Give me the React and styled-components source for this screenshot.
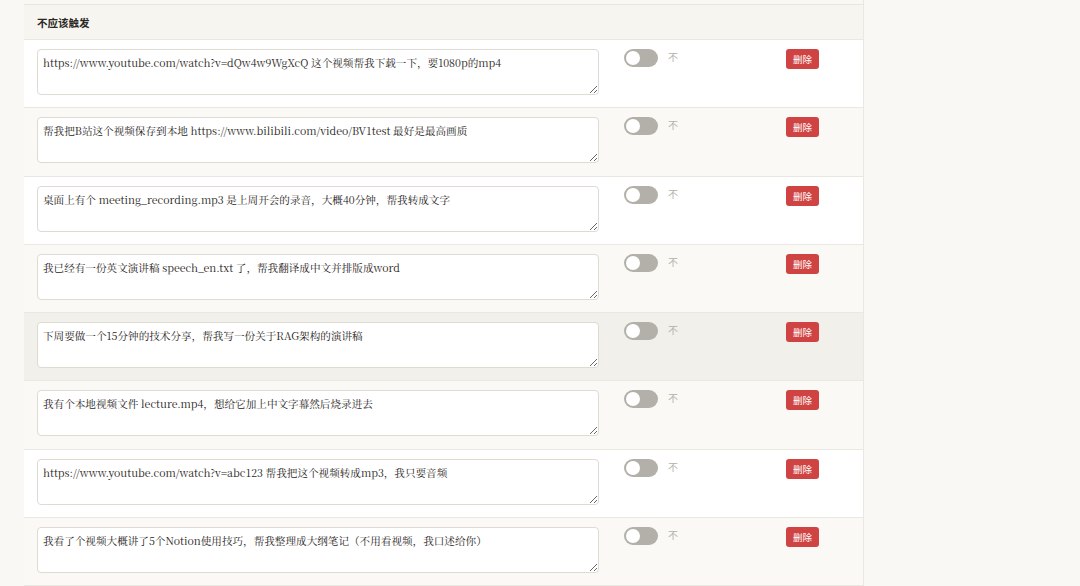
import React from "react";
import styled, { createGlobalStyle } from "styled-components";

const Global = createGlobalStyle`
  html, body { margin: 0; padding: 0; background: #f9f8f4; }
  body { font-family: "Noto Sans CJK SC", "Noto Sans", sans-serif; }
`;

const Page = styled.div`
  padding-left: 24px;
  width: 840px;
`;

const Table = styled.div`
  width: 840px;
  border-right: 1px solid #ebe8e1;
  box-sizing: border-box;
`;

const TopStrip = styled.div`
  height: 4px;
  background: #f9f8f4;
  border-bottom: 1px solid #e9e6df;
`;

const HeaderRow = styled.div`
  height: 34px;
  display: flex;
  align-items: center;
  padding-left: 13px;
  background: #f7f5f0;
  border-bottom: 1px solid #ebe8e1;
  font-size: 10.5px;
  font-weight: 700;
  color: #2a2825;
`;

const Row = styled.div`
  display: grid;
  grid-template-columns: 588px 162px 90px;
  height: 67.3px;
  border-bottom: 1px solid #ebe8e1;
  background: ${(p) => (p.$hover ? "#f1f0eb" : p.$alt ? "#faf9f5" : "#ffffff")};
`;

const Cell = styled.div`
  padding: 9px 0 0 ${(p) => p.$pl || 12}px;
  display: flex;
  align-items: flex-start;
  gap: ${(p) => p.$gap || 0}px;
`;

const TextBox = styled.textarea`
  width: 562px;
  height: 46px;
  box-sizing: border-box;
  margin-left: 1px;
  border: 1px solid #dedbd3;
  border-radius: 4px;
  background: #fff;
  padding: 5px 5px;
  font-family: "Noto Serif CJK SC", "DejaVu Serif", "Noto Sans CJK SC", serif;
  font-size: 10.6px;
  line-height: 16px;
  color: #1f1d1a;
  outline: none;
  resize: vertical;
`;

const Toggle = styled.div`
  width: 34px;
  height: 18px;
  border-radius: 9px;
  background: #b3b0a9;
  position: relative;
  flex: none;
  &::after {
    content: "";
    position: absolute;
    left: 2px;
    top: 2px;
    width: 14px;
    height: 14px;
    border-radius: 50%;
    background: #fff;
  }
`;

const Off = styled.span`
  font-size: 10px;
  line-height: 14px;
  color: #b4b1ab;
  margin-top: 1px;
`;

const DeleteBtn = styled.button`
  width: 33px;
  height: 20px;
  padding: 0;
  border: none;
  border-radius: 3px;
  background: #d04343;
  color: #fff;
  font-family: "Noto Sans CJK SC", sans-serif;
  font-size: 9.5px;
  line-height: 20px;
`;

const items = [
  "https://www.youtube.com/watch?v=dQw4w9WgXcQ 这个视频帮我下载一下，要1080p的mp4",
  "帮我把B站这个视频保存到本地 https://www.bilibili.com/video/BV1test 最好是最高画质",
  "桌面上有个 meeting_recording.mp3 是上周开会的录音，大概40分钟，帮我转成文字",
  "我已经有一份英文演讲稿 speech_en.txt 了，帮我翻译成中文并排版成word",
  "下周要做一个15分钟的技术分享，帮我写一份关于RAG架构的演讲稿",
  "我有个本地视频文件 lecture.mp4，想给它加上中文字幕然后烧录进去",
  "https://www.youtube.com/watch?v=abc123 帮我把这个视频转成mp3，我只要音频",
  "我看了个视频大概讲了5个Notion使用技巧，帮我整理成大纲笔记（不用看视频，我口述给你）",
];

export default function App() {
  return (
    <>
      <Global />
      <Page>
        <Table>
          <TopStrip />
          <HeaderRow>不应该触发</HeaderRow>
          {items.map((t, i) => (
            <Row key={i} $alt={i % 2 === 1} $hover={i === 4}>
              <Cell $pl={12}>
                <TextBox readOnly defaultValue={t} />
              </Cell>
              <Cell $pl={12} $gap={10}>
                <Toggle />
                <Off>不</Off>
              </Cell>
              <Cell $pl={12}>
                <DeleteBtn>删除</DeleteBtn>
              </Cell>
            </Row>
          ))}
        </Table>
      </Page>
    </>
  );
}
